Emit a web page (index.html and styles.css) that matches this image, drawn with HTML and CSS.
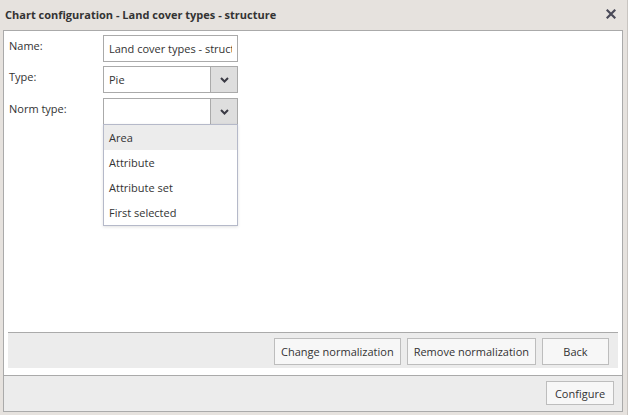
FILE: index.html
```html
<!DOCTYPE html>
<html>
<head>
<meta charset="utf-8">
<link rel="stylesheet" href="styles.css">
</head>
<body>
<div class="window">
  <div class="header">
    <span class="title">Chart configuration - Land cover types - structure</span>
    <span class="close">
      <svg width="10" height="10" viewBox="0 0 10 10"><path d="M1.5 1.5 L8.5 8.5 M8.5 1.5 L1.5 8.5" stroke="#4a4a58" stroke-width="2.2" stroke-linecap="square"/></svg>
    </span>
  </div>
  <div class="panel">
    <div class="form">
      <div class="row">
        <label class="label">Name:</label>
        <input class="field text" type="text" value="Land cover types - structure" readonly>
      </div>
      <div class="row">
        <label class="label">Type:</label>
        <div class="field combo">
          <span class="value">Pie</span>
          <span class="trigger"><svg width="9" height="6" viewBox="0 0 9 6"><path d="M1 1 L4.5 4.5 L8 1" fill="none" stroke="#3a3a44" stroke-width="2"/></svg></span>
        </div>
      </div>
      <div class="row">
        <label class="label">Norm type:</label>
        <div class="field combo">
          <span class="value"></span>
          <span class="trigger"><svg width="9" height="6" viewBox="0 0 9 6"><path d="M1 1 L4.5 4.5 L8 1" fill="none" stroke="#3a3a44" stroke-width="2"/></svg></span>
          <ul class="list">
            <li class="item active">Area</li>
            <li class="item">Attribute</li>
            <li class="item">Attribute set</li>
            <li class="item">First selected</li>
          </ul>
        </div>
      </div>
    </div>
    <div class="toolbar">
      <button class="btn">Change normalization</button>
      <button class="btn">Remove normalization</button>
      <button class="btn back">Back</button>
    </div>
    <div class="footer">
      <button class="btn configure">Configure</button>
    </div>
  </div>
</div>
</body>
</html>
```
FILE: styles.css
```css
* { box-sizing: border-box; }
html, body { margin: 0; padding: 0; }
body {
  background: #e6e2de;
  font-family: "Open Sans", "DejaVu Sans", sans-serif;
  font-size: 11px;
  color: #333;
}
.window {
  width: 628px;
  height: 415px;
  display: flex;
  flex-direction: column;
  border-right: 1px solid #c9c5c1;
}
.header {
  height: 30px;
  display: flex;
  align-items: center;
  justify-content: space-between;
  padding: 0 11px 2px 5px;
}
.title {
  font-weight: 700;
  font-size: 11px;
  color: #333;
}
.close { display: flex; }
.panel {
  margin: 0 4px 3px 3px;
  flex: 1;
  background: #fff;
  border: 1px solid #aaa;
  display: flex;
  flex-direction: column;
}
.form {
  flex: 1;
  padding: 4px 0 0 5px;
  display: flex;
  flex-direction: column;
  gap: 4px;
}
.row {
  display: flex;
  align-items: flex-start;
}
.row + .row + .row { margin-top: 1px; }
.label {
  width: 94px;
  padding-top: 3px;
}
.field {
  width: 135px;
  height: 27px;
  border: 1px solid #aaa;
  background: #fff;
  margin: 0;
}
.text {
  font-family: "Open Sans", "DejaVu Sans", sans-serif;
  font-size: 11px;
  color: #333;
  padding: 0 5px;
  outline: none;
}
.combo {
  position: relative;
  display: flex;
}
.combo .value {
  flex: 1;
  padding-left: 5px;
  line-height: 25px;
}
.trigger {
  width: 27px;
  background: #dedede;
  border-left: 1px solid #aaa;
  display: flex;
  align-items: center;
  justify-content: center;
}
.list {
  position: absolute;
  left: -1px;
  top: 25px;
  width: 135px;
  margin: 0;
  padding: 0;
  list-style: none;
  background: #fff;
  border: 1px solid #b5b9c9;
  box-shadow: 0 1px 3px rgba(0,0,0,0.12);
  z-index: 2;
}
.item {
  height: 25px;
  line-height: 25px;
  padding-left: 5px;
}
.item.active { background: #ececec; }
.toolbar {
  margin: 0 4px 7px 4px;
  border-top: 1px solid #aaa;
  background: #ececec;
  height: 36px;
  display: flex;
  justify-content: flex-end;
  align-items: flex-start;
  gap: 6px;
  padding: 5px 9px 0 0;
}
.btn {
  font-family: "Open Sans", "DejaVu Sans", sans-serif;
  font-size: 11px;
  color: #333;
  background: #f7f7f7;
  border: 1px solid #bdbdbd;
  height: 27px;
  padding: 0 6px;
  margin: 0;
}
.back { width: 67px; }
.footer {
  border-top: 1px solid #aaa;
  background: #ececec;
  height: 36px;
  display: flex;
  justify-content: flex-end;
  align-items: flex-start;
  padding: 5px 8px 0 0;
}
.configure { height: 24px; width: 68px; }
```
